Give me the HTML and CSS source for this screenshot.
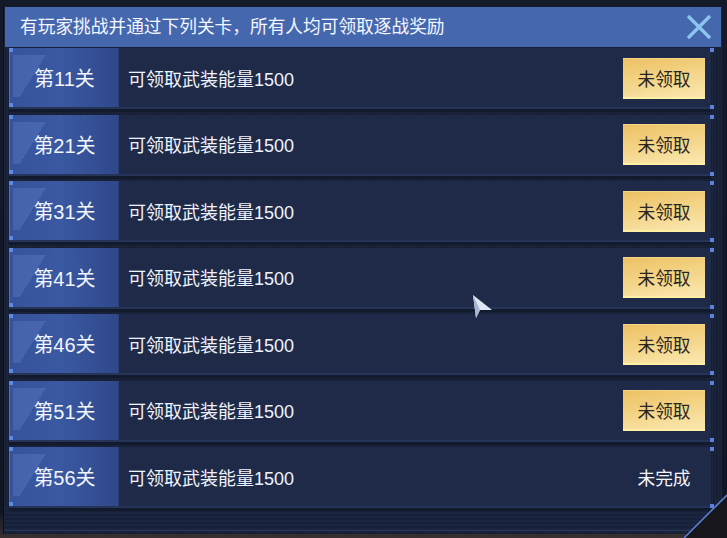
FILE: index.html
```html
<!DOCTYPE html>
<html lang="zh">
<head>
<meta charset="utf-8">
<link rel="stylesheet" href="styles.css">
</head>
<body>
<div class="stage">
  <div class="dialog">
    <div class="header">
      <span class="title">有玩家挑战并通过下列关卡，所有人均可领取逐战奖励</span>
      <svg class="close" width="26" height="26" viewBox="0 0 26 26"><path d="M2 2 L24 24 M24 2 L2 24" stroke="#8cc6ef" stroke-width="3.2" stroke-linecap="butt"/></svg>
    </div>
    <div class="list">
      <div class="row"><div class="label">第11关</div><div class="desc">可领取武装能量1500</div><div class="action btn">未领取</div></div>
      <div class="row"><div class="label">第21关</div><div class="desc">可领取武装能量1500</div><div class="action btn">未领取</div></div>
      <div class="row"><div class="label">第31关</div><div class="desc">可领取武装能量1500</div><div class="action btn">未领取</div></div>
      <div class="row"><div class="label">第41关</div><div class="desc">可领取武装能量1500</div><div class="action btn">未领取</div></div>
      <div class="row"><div class="label">第46关</div><div class="desc">可领取武装能量1500</div><div class="action btn">未领取</div></div>
      <div class="row"><div class="label">第51关</div><div class="desc">可领取武装能量1500</div><div class="action btn">未领取</div></div>
      <div class="row"><div class="label">第56关</div><div class="desc">可领取武装能量1500</div><div class="action status">未完成</div></div>
    </div>
    <div class="footer"></div>
  </div>
  <svg class="corner" width="46" height="46" viewBox="0 0 46 46"><path d="M46 3 L46 46 L3 46 Z" fill="#16161c"/><path d="M46 3 L3 46" stroke="#5b7fd0" stroke-width="1.6"/></svg>
  <svg class="cursor" width="22" height="26" viewBox="0 0 22 26"><path d="M1 1 L20 16 L8 16 L4 24 Z" fill="#dfe6f4"/><path d="M1 1 L8 16 L4 24 Z" fill="#a9b6d2"/></svg>
</div>
</body>
</html>
```

FILE: styles.css
```css
* { box-sizing: border-box; }
html, body { margin: 0; padding: 0; }
body {
  width: 727px;
  height: 538px;
  overflow: hidden;
  background: #0e1322;
  font-family: "Liberation Sans", "Noto Sans CJK SC", sans-serif;
  color: #f2f5fb;
}
.stage {
  position: relative;
  width: 727px;
  height: 538px;
  padding: 5px 5px 0 3px;
  background: linear-gradient(180deg, #141a2a 0, #101624 95%, #3a3130 100%);
}
.dialog {
  position: relative;
  width: 719px;
  height: 527px;
  background: #171f36;
  border-left: 1px solid #0b0f1b;
  background-image: repeating-linear-gradient(90deg, rgba(255,255,255,0.03) 0 1px, transparent 1px 3px);
}
.header {
  display: flex;
  align-items: center;
  justify-content: space-between;
  height: 40px;
  margin: 2px 1px 0 1px;
  padding: 0 9px 0 15px;
  background: #4567ae;
}
.title {
  font-size: 17.7px;
  color: #f4f7ff;
  line-height: 1;
  padding-top: 1px;
}
.close { display: block; }
.list {
  display: flex;
  flex-direction: column;
  gap: 5.5px;
  padding: 1px 11px 0 5px;
}
.row {
  position: relative;
  display: flex;
  align-items: center;
  height: 61px;
  background: #1f2a49;
  border-bottom: 2px solid #27345a;
  box-shadow: 0 3px 0 #121a2d;
}
.row::before, .row::after {
  content: "";
  position: absolute;
  right: -3px;
  width: 4px;
  height: 4px;
  background: #5b80e0;
}
.row::before { top: 0; }
.row::after { bottom: -2px; }
.label {
  position: relative;
  display: flex;
  align-items: center;
  justify-content: center;
  width: 110px;
  height: 100%;
  font-size: 20px;
  padding-left: 1px;
  background:
    linear-gradient(122deg, rgba(150,180,255,0.16) 0 42%, transparent 42%) 3px 7px / 52px 42px no-repeat,
    linear-gradient(90deg, #36529a 0, #3a59a2 45%, #30488a 100%);
  border-left: 1px solid #4b6fc4;
  border-right: 1px solid #2b3f78;
}
.label::before, .label::after {
  content: "";
  position: absolute;
  left: -1px;
  width: 4px;
  height: 4px;
  background: #5b8ae8;
}
.label::before { top: 0; }
.label::after { bottom: 0; }
.desc {
  flex: 1;
  padding-left: 9px;
  font-size: 18px;
  color: #f0f3fb;
}
.action {
  display: flex;
  align-items: center;
  justify-content: center;
  width: 82px;
  height: 41px;
  margin-right: 6px;
  margin-top: 1px;
  font-size: 17.7px;
}
.btn {
  color: #2b2622;
  background: linear-gradient(170deg, #edc165 0%, #f3d384 45%, #fae7b0 100%);
  border-bottom: 2px solid #fff0a4;
  border-top: 1px solid #f6d78a;
}
.status { color: #f3f5fb; }
.footer {
  height: 23px;
  background: repeating-linear-gradient(180deg, #1b2540 0 2px, #16203a 2px 4px);
  border-bottom: 1px solid #2a3758;
}
.corner {
  position: absolute;
  right: 0;
  bottom: 0;
}
.cursor {
  position: absolute;
  left: 472px;
  top: 294px;
}
```
